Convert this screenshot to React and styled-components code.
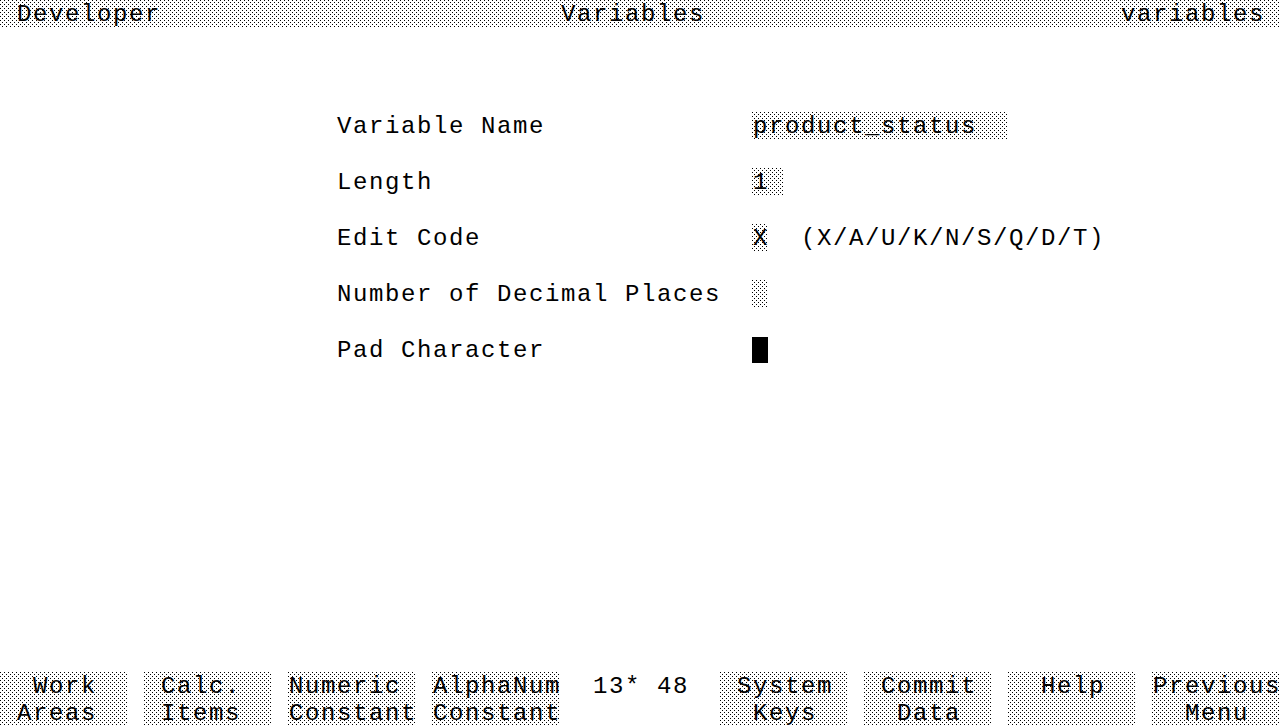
import React from "react";
import styled, { createGlobalStyle, css } from "styled-components";

const CELL = 16;

const GlobalStyle = createGlobalStyle`
  html, body {
    margin: 0;
    padding: 0;
    background: #fff;
  }
  body {
    font-family: "Liberation Mono", "DejaVu Sans Mono", monospace;
    color: #000;
  }
`;

// halftone grey used by the terminal for inverse/half-bright fields
const halftone = css`
  background-color: #fff;
  background-image: conic-gradient(at 1px 1px, transparent 75%, #000 0),
    conic-gradient(at 1px 1px, transparent 75%, #000 0);
  background-size: 4px 4px;
  background-position: 0 0, 2px 2px;
`;

// glyphs sit a little low and right inside their 16x28 cell
const cellText = css`
  padding: 2px 0 0 1px;
  line-height: 26px;
`;

const Screen = styled.div`
  width: 1280px;
  height: 726px;
  display: flex;
  flex-direction: column;
  overflow: hidden;
  font-size: 24px;
  letter-spacing: 1.6px;
  white-space: pre;
`;

const Grid = styled.div`
  display: grid;
  grid-template-columns: repeat(80, ${CELL}px);
  grid-template-rows: 28px;
  align-items: stretch;
`;

const TopBar = styled(Grid)`
  ${halftone};
  height: 28px;
`;

const Cell = styled.span`
  ${cellText};
  grid-row: 1;
  grid-column: ${(p) => p.col} / span ${(p) => p.span || 1};
`;

const Form = styled.div`
  display: flex;
  flex-direction: column;
  gap: 28px;
  padding-top: 84px;
`;

const FormRow = styled(Grid)`
  height: 28px;
`;

const Field = styled.span`
  ${halftone};
  ${cellText};
  grid-row: 1;
  grid-column: 48 / span ${(p) => p.cols};
`;

const Cursor = styled.span`
  grid-row: 1;
  grid-column: 48 / span 1;
  margin: 1px 0;
  background: #000;
`;

const Hint = styled.span`
  ${cellText};
  grid-row: 1;
  grid-column: 51 / span 22;
`;

const SoftKeys = styled(Grid)`
  margin-top: auto;
  height: 54px;
  grid-template-rows: 54px;
`;

const Key = styled.div`
  ${halftone};
  grid-row: 1;
  grid-column: ${(p) => p.col} / span 8;
  display: flex;
  flex-direction: column;
`;

const KeyLine = styled.span`
  height: 27px;
  box-sizing: border-box;
  padding-top: 2px;
  line-height: 25px;
  padding-left: ${(p) => p.offset * CELL + 1}px;
`;

const Status = styled.span`
  grid-row: 1;
  grid-column: 38 / span 7;
  align-self: start;
  padding: 2px 0 0 1px;
  line-height: 25px;
`;

const fields = [
  { label: "Variable Name", value: "product_status", cols: 16 },
  { label: "Length", value: "1", cols: 2 },
  { label: "Edit Code", value: "X", cols: 1, hint: "(X/A/U/K/N/S/Q/D/T)" },
  { label: "Number of Decimal Places", value: "", cols: 1 },
  { label: "Pad Character", cursor: true },
];

const keys = [
  { col: 1, lines: ["Work", "Areas"] },
  { col: 10, lines: ["Calc.", "Items"] },
  { col: 19, lines: ["Numeric", "Constant"] },
  { col: 28, lines: ["AlphaNum", "Constant"] },
  { col: 46, lines: ["System", "Keys"] },
  { col: 55, lines: ["Commit", "Data"] },
  { col: 64, lines: ["Help", ""] },
  { col: 73, lines: ["Previous", "Menu"] },
];

export default function App() {
  return (
    <>
      <GlobalStyle />
      <Screen>
        <TopBar>
          <Cell col={2} span={9}>Developer</Cell>
          <Cell col={36} span={9}>Variables</Cell>
          <Cell col={71} span={9}>variables</Cell>
        </TopBar>

        <Form>
          {fields.map((f) => (
            <FormRow key={f.label}>
              <Cell col={22} span={24}>{f.label}</Cell>
              {f.cursor ? (
                <Cursor />
              ) : (
                <Field cols={f.cols}>{f.value}</Field>
              )}
              {f.hint && <Hint>{f.hint}</Hint>}
            </FormRow>
          ))}
        </Form>

        <SoftKeys>
          {keys.map((k) => (
            <Key key={k.col} col={k.col}>
              {k.lines.map((l, i) => (
                <KeyLine key={i} offset={Math.floor((8 - l.length) / 2)}>
                  {l}
                </KeyLine>
              ))}
            </Key>
          ))}
          <Status>13* 48</Status>
        </SoftKeys>
      </Screen>
    </>
  );
}
